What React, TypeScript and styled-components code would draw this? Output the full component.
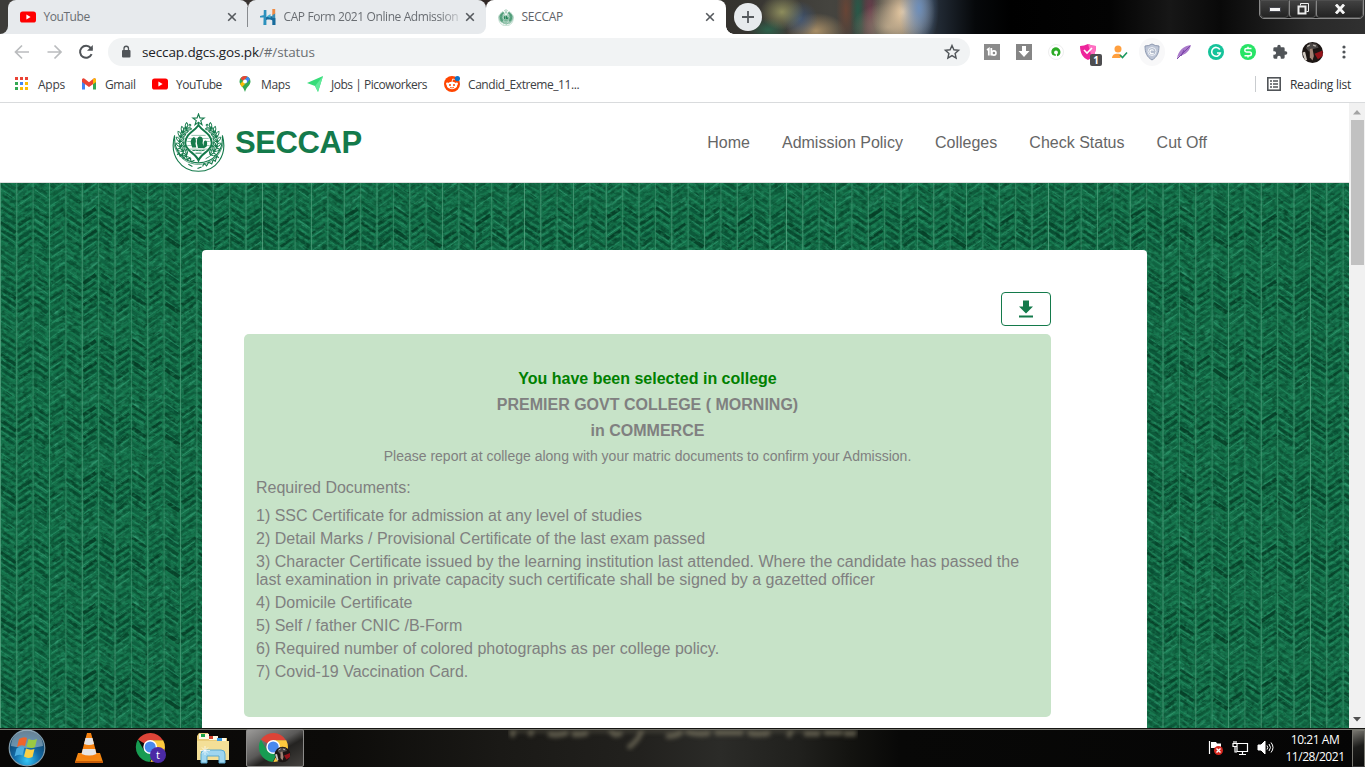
import React from "react";
import styled, { createGlobalStyle } from "styled-components";

const Global = createGlobalStyle`
  * { box-sizing: border-box; }
  html, body { margin: 0; padding: 0; overflow: hidden; background: #000; }
  p, h1, ol { margin: 0; padding: 0; }
`;

const UI = `"Open Sans", "Noto Sans", sans-serif`;
const PAGE = `"Liberation Sans", Arial, sans-serif`;
const GREEN = "#147a4b";

const Screen = styled.div`
  width: 1365px;
  height: 767px;
  display: flex;
  flex-direction: column;
  overflow: hidden;
  font-family: ${UI};
`;

/* ---------- Title bar ---------- */
const TitleBar = styled.div`
  height: 34px;
  flex: none;
  display: flex;
  align-items: flex-start;
  background:
    radial-gradient(ellipse 20px 44px at 919px 8px, rgba(100, 145, 205, 0.8), transparent),
    radial-gradient(ellipse 32px 38px at 903px 12px, rgba(235, 205, 165, 1), transparent),
    radial-gradient(ellipse 36px 24px at 888px 27px, rgba(170, 155, 130, 0.8), transparent),
    radial-gradient(ellipse 9px 40px at 870px 12px, rgba(120, 60, 80, 0.75), transparent),
    radial-gradient(ellipse 8px 40px at 858px 10px, rgba(35, 95, 75, 0.8), transparent),
    radial-gradient(ellipse 10px 34px at 846px 10px, rgba(120, 70, 50, 0.7), transparent),
    radial-gradient(ellipse 22px 18px at 782px 12px, rgba(155, 155, 100, 0.85), transparent),
    radial-gradient(ellipse 18px 18px at 800px 19px, rgba(60, 90, 135, 0.7), transparent),
    radial-gradient(ellipse 30px 18px at 816px 31px, rgba(185, 155, 110, 0.85), transparent),
    radial-gradient(ellipse 20px 12px at 768px 30px, rgba(40, 115, 85, 0.7), transparent),
    linear-gradient(90deg, #3f3d3a 0, #302725 480px, #35332f 740px, #45443f 830px, #3b3c3c 915px, #202832 940px, #06080a 975px, #000 1010px, #030303 1110px, #171717 1170px, #090909 1220px, #292929 1310px, #303030 1365px);
`;
const LeftEdge = styled.div`
  width: 8px;
  height: 34px;
  background: #e7eaed;
  &::before {
    content: "";
    display: block;
    height: 34px;
    background: #3d3c39;
    border-bottom-right-radius: 8px;
  }
`;
const TabBack = styled.div<{ $w: number; $under: string }>`
  width: ${(p) => p.$w}px;
  height: 34px;
  background: ${(p) => p.$under};
`;
const Tab = styled.div<{ $active?: boolean; $end?: boolean }>`
  height: 34px;
  display: flex;
  align-items: center;
  padding: 0 11px 0 12px;
  color: ${(p) => (p.$active ? "#5f6368" : "#6a6e73")};
  background: ${(p) => (p.$active ? "#fff" : "#e7eaed")};
  border-radius: 8px 8px ${(p) => (p.$end ? "8px" : "0")} 0;
  svg { flex: none; }
`;
const TabTitle = styled.span<{ $ls: number; $fade?: boolean }>`
  flex: 1;
  min-width: 0;
  margin: 0 5px 0 7.5px;
  font-size: 12px;
  line-height: 18px;
  letter-spacing: ${(p) => p.$ls}px;
  white-space: nowrap;
  ${(p) => p.$fade && "-webkit-mask-image: linear-gradient(90deg, #000 155px, rgba(0,0,0,.25) 175px);"}
`;
const TabRule = styled.i`
  width: 1px;
  height: 20px;
  margin: 7px 0 0 -1px;
  background: #888b8f;
`;
const Foot = styled.div`
  width: 8px;
  height: 34px;
  display: flex;
  align-items: flex-end;
  &::before {
    content: "";
    width: 8px;
    height: 8px;
    background: radial-gradient(circle at 100% 0, transparent 7.5px, #fff 8px);
  }
`;
const NewTab = styled.div`
  width: 28px;
  height: 28px;
  margin-top: 3px;
  display: grid;
  place-items: center;
  border-radius: 50%;
  background: #e7eaed;
`;
const WindowButtons = styled.div`
  display: flex;
  height: 20px;
  margin: -1px 1px 0 auto;
  border: 1px solid #898989;
  border-radius: 0 0 5px 5px;
  box-shadow: inset 0 0 0 1px #161616;
`;
const WindowButton = styled.div<{ $w: number }>`
  width: ${(p) => p.$w}px;
  display: grid;
  place-items: center;
  background: linear-gradient(#414141, #232323);
  border: 1px solid #4e4e4e;
  border-radius: 0 0 4px 4px;
  & + & { border-left: 1px solid #858585; }
`;

/* ---------- Toolbar ---------- */
const Toolbar = styled.div`
  height: 36px;
  flex: none;
  display: flex;
  align-items: center;
  padding: 0 8px 0 12px;
  background: #fff;
`;
const NavIcons = styled.div`
  display: flex;
  gap: 12px;
  width: 96px;
`;
const Address = styled.div`
  width: 862px;
  height: 28px;
  display: flex;
  align-items: center;
  padding: 0 9px 0 12px;
  border-radius: 14px;
  background: #f1f3f4;
`;
const Url = styled.span`
  flex: 1;
  margin-left: 10px;
  font-size: 13.5px;
  letter-spacing: -0.12px;
  color: #6b6f73;
  b { font-weight: 400; color: #202124; }
`;
const Extensions = styled.div`
  flex: 1;
  display: flex;
  justify-content: space-between;
  align-items: center;
  margin-left: 9px;
`;
const ExtSlot = styled.div<{ $round?: boolean }>`
  position: relative;
  width: 26px;
  height: 28px;
  display: grid;
  place-items: center;
  border-radius: 50%;
  background: ${(p) => (p.$round ? "#f8f8f9" : "transparent")};
`;
const CountBadge = styled.span`
  position: absolute;
  right: -1px;
  bottom: 0;
  width: 12px;
  height: 12px;
  border-radius: 2px;
  background: #4d4d50;
  color: #fff;
  font: 700 10px/12px ${UI};
  text-align: center;
`;

/* ---------- Bookmarks ---------- */
const Bookmarks = styled.div`
  height: 33px;
  flex: none;
  display: flex;
  align-items: center;
  padding: 0 14px 4px 13px;
  background: #fff;
  border-bottom: 1px solid #d9dbdd;
`;
const Bookmark = styled.div<{ $w: number; $ls?: number }>`
  width: ${(p) => p.$w}px;
  display: flex;
  align-items: center;
  gap: 8px;
  font-size: 12px;
  letter-spacing: ${(p) => p.$ls ?? -0.45}px;
  color: #3c4043;
  white-space: nowrap;
  svg { flex: none; }
`;
const ReadingList = styled.div`
  margin-left: auto;
  display: flex;
  align-items: center;
  gap: 8px;
  padding-left: 10px;
  border-left: 1px solid #c9cccf;
  height: 16px;
  font-size: 12px;
  letter-spacing: -0.26px;
  color: #303336;
`;

/* ---------- Web page ---------- */
const Viewport = styled.div`
  height: 625px;
  flex: none;
  display: flex;
`;
const Site = styled.main`
  width: 1349px;
  display: flex;
  flex-direction: column;
  font-family: ${PAGE};
`;
const SiteHeader = styled.header`
  height: 80px;
  flex: none;
  display: flex;
  align-items: center;
  padding: 0 142px 0 172px;
  background: #fff;
  border-bottom: 1px solid #ddd;
`;
const Brand = styled.h1`
  margin-left: 10px;
  font-size: 31px;
  line-height: 40px;
  letter-spacing: -0.4px;
  color: ${GREEN};
`;
const SiteNav = styled.nav`
  display: flex;
  gap: 32.1px;
  margin-left: auto;
  font-size: 16px;
  color: #666;
`;
const Stage = styled.section`
  position: relative;
  flex: 1;
  display: flex;
  padding: 67px 202px 0;
  overflow: hidden;
`;
const TextureSvg = styled.svg`
  position: absolute;
  inset: 0;
  width: 100%;
  height: 100%;
`;
const Card = styled.article`
  position: relative;
  width: 945px;
  display: flex;
  flex-direction: column;
  padding: 42px 96px 11px 42px;
  background: #fff;
  border-radius: 4px 4px 0 0;
`;
const DownloadButton = styled.button`
  width: 50px;
  height: 34px;
  margin: 0 0 8px auto;
  padding: 0;
  display: grid;
  place-items: center;
  flex: none;
  background: #fff;
  border: 1px solid ${GREEN};
  border-radius: 4px;
`;
const Notice = styled.div`
  height: 383px;
  flex: none;
  padding: 32px 12px 0;
  border-radius: 5px;
  background: #c7e3c8;
  color: #808080;
  font-size: 16px;
`;
const Headline = styled.p<{ $strong?: boolean }>`
  line-height: 26px;
  font-weight: 700;
  text-align: center;
  color: ${(p) => (p.$strong ? "#008000" : "inherit")};
`;
const Advice = styled.p`
  line-height: 24px;
  font-size: 14px;
  text-align: center;
`;
const ListTitle = styled.p`
  margin: 11px 0 10px;
  line-height: 18px;
`;
const Requirement = styled.p`
  margin-bottom: 5px;
  line-height: 18px;
`;
const ScrollTrack = styled.div`
  width: 16px;
  display: flex;
  flex-direction: column;
  justify-content: space-between;
  align-items: center;
  padding: 6px 1px 6px;
  background: #f1f1f1;
`;
const Thumb = styled.div`
  width: 13px;
  height: 145px;
  margin: 5px 0 auto;
  background: #c1c1c1;
`;

/* ---------- Taskbar ---------- */
const Taskbar = styled.footer`
  position: relative;
  height: 39px;
  flex: none;
  display: flex;
  align-items: stretch;
  border-top: 1px solid #151512;
  box-shadow: inset 0 1px #77776f;
  background: linear-gradient(90deg, #080706 0, #0c0b09 330px, #1a1916 500px, #22211e 640px, #2b2b28 720px, #20201d 800px, #131310 850px, #080807 900px, #050505 1365px);
`;
const TaskSlot = styled.div<{ $w: number; $active?: boolean }>`
  width: ${(p) => p.$w}px;
  display: grid;
  place-items: center;
  ${(p) =>
    p.$active &&
    `
    border: 1px solid #8c8b89;
    border-radius: 2px;
    background: linear-gradient(150deg, #9b9a98 0, #5a5958 45%, #242321 60%, #45423f 100%);
  `}
`;
const Reflection = styled.div`
  position: absolute;
  left: 508px;
  top: 1px;
  width: 350px;
  height: 22px;
  overflow: hidden;
  svg { display: block; filter: blur(1.9px); }
`;
const Tray = styled.div`
  display: flex;
  align-items: center;
  gap: 8px;
  margin-left: auto;
  margin-right: 7px;
`;
const Clock = styled.div`
  width: 60px;
  margin-left: 3px;
  text-align: center;
  color: #fff;
  font-size: 12px;
  line-height: 17px;
  letter-spacing: -0.45px;
  white-space: nowrap;
`;
const ShowDesktop = styled.div`
  width: 13px;
  margin-top: 1px;
  border: 1px solid #77766f;
  border-bottom-color: #333;
  background: linear-gradient(160deg, #77756f, #1c1c1a 45%, #0b0b0a);
`;

/* ---------- Icons ---------- */
const YouTubeIcon = () => (
  <svg width="16" height="16" viewBox="0 0 16 16">
    <rect y="2.4" width="16" height="11.2" rx="2.6" fill="#f00" />
    <path d="M6.4 5.6v4.8L10.6 8z" fill="#fff" />
  </svg>
);
const CloseIcon = () => (
  <svg width="10" height="10" viewBox="0 0 10 10" stroke="#55595d" strokeWidth="1.6">
    <path d="M1.2 1.2l7.6 7.6M8.8 1.2L1.2 8.8" />
  </svg>
);
const HIcon = () => (
  <svg width="16" height="16" viewBox="0 0 16 16">
    <path d="M3.800 1h2.600v15H3.400zM0 7l4-1v2.500H0z" fill="#2c91bd" />
    <path d="M6 8.200c4-1.500 8-1 9.500 1V16h-3.200v-4.500c-1-1-4.500-1.200-6.300-.4z" fill="#176b9c" />
    <path d="M12.300 5.500l2.900-1.500V9h-2.900z" fill="#3a8db4" />
    <path d="M12.300 0h2.900v4.500l-2.900 1.800z" fill="#ee8a43" />
    <path d="M6.500 7.600l4-2.500V9z" fill="#45afd2" />
  </svg>
);

const Emblem = ({ w, h, tiny }: { w: number; h: number; tiny?: boolean }) => (
  <svg width={w} height={h} viewBox="0 0 52 58" fill="none" stroke={tiny ? "#4b9a75" : GREEN} strokeWidth={tiny ? 2.2 : 0.9}>
    <path d="M26 1l1.400 3.900 4.100.1-3.300 2.500 1.200 4L26 9.200l-3.400 2.300 1.200-4-3.300-2.500 4.100-.1z" strokeWidth="1.100" />
    {[0, 1].map((side) => (
      <g key={side} transform={side ? "translate(52 0) scale(-1 1)" : undefined}>
        <path d="M19 45C9 40 5 31 9 22c1.500-4 3-6 5-9" strokeWidth=".8" />
        {[0, 1, 2, 3, 4, 5, 6].map((i) => {
          const a = ((130 + i * 16) * Math.PI) / 180;
          const x = 26 + Math.cos(a) * 17.8;
          const y = 28 + Math.sin(a) * 17;
          return (
            <g key={i} transform={`translate(${x.toFixed(1)} ${y.toFixed(1)}) rotate(${226 + i * 16})`}>
              <path d="M0 0q1-4 4.500-4.600q.5 3.600-4.500 4.600z" />
              <path d="M0 0q1 3.500 4.500 3.400q0-3-4.500-3.400z" fill={GREEN} fillOpacity=".35" />
              <circle cx="5.500" cy="-.6" r=".9" />
            </g>
          );
        })}
      </g>
    ))}
    <path d="M26 11.500C27.500 16.500 39 19.500 39 29.500c0 8-10 9.500-13 17-3-7.500-13-9-13-17 0-10 11.500-13 13-18z" fill="#fff" strokeWidth="1.900" />
    <path d="M19 22h14M16 25h20M15 28h4M33 28h4M15 32h6M31 32h6M17 35.500h18" strokeWidth=".7" opacity=".65" />
    <path d="M18.500 30c-.5-4 1-5.500 3-6.500 2 1 2.500 3.500 1.500 6.500l.8 4h-4zM24.500 30c-.5-5 1-7 3-7 2.500 0 3.500 3 2.500 6.500l1.500 5h-6zM31 31c0-3 .5-4 2-4s2 3 1 6l-3 2z" fill={GREEN} stroke="none" />
    <path d="M20 37c4-1 8 1 12-.500M23 39.500h6" />
    <path d="M2.500 22C-3 42 9 57.300 26 57.300S55 42 49.500 22c1 16-9 27-23.500 27S1.500 38 2.500 22z" fill="#fff" strokeWidth="1.100" />
    <path d="M1.500 29c3 15 14 21.500 24.500 21.500S47.500 44 50.500 29" strokeWidth=".7" />
    <path d="M5 41l2-1.500 1 3 2.500-2 .5 4 3-2.500 1 4 2.500-2 1.500 4 3-1.500M30 52.500l1.500-3 2.500 2.500 2-3.500 3 1.500 1.500-4 2 1.500 1.500-5 2 1.500M25 54.500l4-1.500M16 50.500l4 2" strokeWidth="1.100" />
    {tiny && <path d="M4 20h44v20L26 54 4 40z" fill="#4b9a75" opacity=".35" stroke="none" />}
  </svg>
);

const PhotoArt = () => (
  <g>
    <circle cx="8.500" cy="8.500" r="7.800" fill="#1c1614" />
    <path d="M3.500 5l3-3.500 5 .5 1.500 3-4 1-3 2z" fill="#4b4745" />
    <path d="M4.500 4l2-1M9 3l2 .8" stroke="#bab3ac" strokeWidth="1" />
    <path d="M10 9.500l6-2.500v4l-3.500 2.500z" fill="#96141a" />
    <path d="M6.500 6l2-.5 1 5.500-1 3.500-2-2.500z" fill="#a08476" />
    <path d="M1 8.500l2-.5 1.500 6-1.500.5z" fill="#cfc8bf" />
  </g>
);

const ChromeIcon = ({ badge }: { badge: "t" | "photo" }) => (
  <svg width="34" height="34" viewBox="0 0 34 34">
    <path d="M15 16L2.900 8.600A14.800 14.800 0 0 1 28 9.200L15 9.500z" fill="#dc4437" />
    <path d="M15 16V9.200h13.200A14.800 14.800 0 0 1 15.400 31l5.500-11.600z" fill="#fdca3e" />
    <path d="M15 16l6 3.400-6.500 11.500A14.800 14.800 0 0 1 2.900 8.600L9 19.400z" fill="#179c52" />
    <circle cx="15.200" cy="16" r="6.900" fill="#fff" />
    <circle cx="15.200" cy="16" r="5.500" fill="#4a89ee" />
    {badge === "t" ? (
      <>
        <circle cx="23" cy="24" r="8" fill="#4b2aa5" />
        <text x="23" y="28" fill="#fff" fontFamily="Open Sans" fontSize="11" textAnchor="middle">t</text>
      </>
    ) : (
      <g transform="translate(16 15)"><PhotoArt /></g>
    )}
  </svg>
);

/* Deterministic noise keeps the woven backdrop stable between renders. */
const makeRandom = (seed: number) => () => {
  seed = (seed * 1664525 + 1013904223) % 4294967296;
  return seed / 4294967296;
};
const COL = 16.375;
const TILE_H = 66;
const weave = (() => {
  const r = makeRandom(71);
  const darks = ["#043a24", "#06452c", "#084e33"];
  const lights = ["#1d8a5c", "#28936a", "#167a50", "#329a72"];
  const out: { d: string; c: string; w: number; o: number }[] = [];
  const add = (col: number, y: number, x0: number, len: number, slope: number, c: string, w: number, o: number) => {
    for (const shift of [-TILE_H, 0, TILE_H]) {
      const ya = y + shift + (x0 - COL / 2) * slope;
      out.push({
        d: `M${(col * COL + x0).toFixed(1)} ${ya.toFixed(1)}l${len.toFixed(1)} ${(len * slope).toFixed(1)}`,
        c, w, o,
      });
    }
  };
  for (let col = 0; col < 16; col++) {
    const dir = col % 2 === 0 ? 1 : -1;
    for (let i = 0; i < 30; i++) {
      const x0 = r() * 11;
      const pool = r() < 0.4 ? darks : lights;
      add(col, r() * TILE_H, x0, 2 + r() * Math.min(5, COL - x0 - 2), dir * (0.2 + r() * 0.8), pool[Math.floor(r() * pool.length)], 0.8 + r(), 0.3 + r() * 0.4);
    }
    for (let i = 0; i < 9; i++) {
      /* Strands deepen through the lower half of each repeat. */
      const depth = i > 3 ? 0.9 : 0.55;
      const x0 = 0.5 + r() * 2;
      const y = i * 7.33 + r() * 1.5;
      const len = COL - x0 - 0.5 - r() * 2;
      add(col, y, x0, len, dir * 0.68, darks[(i + col) % 3], 2.2 + r() * 1.6, depth * (0.6 + r() * 0.35));
      add(col, y + 3.4, x0, len, dir * 0.68, lights[(i + col) % 4], 0.9, 0.45 + r() * 0.4);
    }
  }
  return out;
})();

const Texture = () => (
  <TextureSvg>
    <defs>
      <filter id="grainDark" x="0" y="0" width="100%" height="100%" colorInterpolationFilters="sRGB">
        <feTurbulence type="fractalNoise" baseFrequency="0.18 0.24" numOctaves="2" seed="4" />
        <feColorMatrix values="0 0 0 0 0.01  0 0 0 0 0.22  0 0 0 0 0.13  5 0 0 0 -2.500" />
      </filter>
      <filter id="grainLight" x="0" y="0" width="100%" height="100%" colorInterpolationFilters="sRGB">
        <feTurbulence type="fractalNoise" baseFrequency="0.2 0.28" numOctaves="2" seed="9" />
        <feColorMatrix values="0 0 0 0 0.17  0 0 0 0 0.6  0 0 0 0 0.42  0 5 0 0 -2.600" />
      </filter>
      <pattern id="weave" width={COL * 16} height={TILE_H} patternUnits="userSpaceOnUse">
        <rect width={COL * 16} height={TILE_H} fill="#147049" />
        {weave.map((s, i) => (
          <path key={i} d={s.d} stroke={s.c} strokeWidth={s.w} opacity={s.o} />
        ))}
      </pattern>
      <pattern id="seams" width={COL * 16} height={TILE_H} patternUnits="userSpaceOnUse">
        {Array.from({ length: 17 }, (_, i) => (
          <path key={i} d={`M${i * COL + 0.4} 0V${TILE_H}`} stroke="#6fb496" strokeWidth="0.8" opacity={i === 0 || i === 16 ? 0.85 : i % 2 ? 0.6 : 0.4} />
        ))}
      </pattern>
    </defs>
    <rect width="100%" height="100%" fill="url(#weave)" />
    <rect width="100%" height="100%" filter="url(#grainDark)" opacity=".35" />
    <rect width="100%" height="100%" filter="url(#grainLight)" opacity=".35" />
    <rect width="100%" height="100%" fill="url(#seams)" />
  </TextureSvg>
);

const requirements = [
  "1) SSC Certificate for admission at any level of studies",
  "2) Detail Marks / Provisional Certificate of the last exam passed",
  "3) Character Certificate issued by the learning institution last attended. Where the candidate has passed the last examination in private capacity such certificate shall be signed by a gazetted officer",
  "4) Domicile Certificate",
  "5) Self / father CNIC /B-Form",
  "6) Required number of colored photographs as per college policy.",
  "7) Covid-19 Vaccination Card.",
];

function BrowserChrome() {
  return (
    <>
      <TitleBar>
        <LeftEdge />
        <TabBack $w={240} $under="transparent">
          <Tab><YouTubeIcon /><TabTitle $ls={-0.45}>YouTube</TabTitle><CloseIcon /></Tab>
        </TabBack>
        <TabRule />
        <TabBack $w={238} $under="linear-gradient(transparent 50%, #fff 50%)">
          <Tab $end><HIcon /><TabTitle $ls={-0.4} $fade>CAP Form 2021 Online Admission</TabTitle><CloseIcon /></Tab>
        </TabBack>
        <TabBack $w={240} $under="transparent">
          <Tab $active><Emblem w={16} h={17} tiny /><TabTitle $ls={-0.3}>SECCAP</TabTitle><CloseIcon /></Tab>
        </TabBack>
        <Foot />
        <NewTab>
          <svg width="12" height="12" viewBox="0 0 12 12" stroke="#55595d" strokeWidth="1.800"><path d="M6 0v12M0 6h12" /></svg>
        </NewTab>
        <WindowButtons>
          <WindowButton $w={29}><svg width="12" height="5"><rect x=".5" y=".5" width="11" height="4" fill="#f5f5f5" stroke="#45464d" /></svg></WindowButton>
          <WindowButton $w={27}>
            <svg width="12" height="12" viewBox="0 0 12 12" fill="none" stroke="#eee"><path d="M3.500 2.500v-2h8v8h-2" /><rect x="1.500" y="3.500" width="7" height="7" strokeWidth="2" /></svg>
          </WindowButton>
          <WindowButton $w={47}><svg width="12" height="10" viewBox="0 0 12 10" stroke="#f4f4f4" strokeWidth="2.800"><path d="M2 .5l8 9M10 .5l-8 9" /></svg></WindowButton>
        </WindowButtons>
      </TitleBar>
      <Toolbar>
        <NavIcons>
          {[false, true].map((flip) => (
            <svg key={String(flip)} width="20" height="20" viewBox="0 0 20 20" fill="none" stroke="#babcbe" strokeWidth="1.700">
              <path d={flip ? "M3.500 10h13M10.500 3.500l6.500 6.500-6.500 6.500" : "M17 10h-13M10 3.500L3.500 10l6.500 6.500"} />
            </svg>
          ))}
          <svg width="20" height="20" viewBox="0 0 20 20" fill="none" stroke="#505458" strokeWidth="2">
            <path d="M15.600 12.200A6 6 0 1 1 14.700 6L16 7.500" /><path d="M16.800 3v5.800H11z" fill="#505458" stroke="none" />
          </svg>
        </NavIcons>
        <Address>
          <svg width="12" height="14" viewBox="0 0 12 14"><rect x="2" y="5" width="8.500" height="7.500" rx="1" fill="#505458" /><path d="M4 5V3.500a2.250 2.250 0 0 1 4.500 0V5" fill="none" stroke="#505458" strokeWidth="1.300" /></svg>
          <Url><b>seccap.dgcs.gos.pk</b>/#/status</Url>
          <svg width="18" height="18" viewBox="0 0 18 18" fill="none" stroke="#505458" strokeWidth="1.400"><path d="M9 2.500l1.900 4.300 4.700.5-3.500 3.100 1 4.600L9 12.600 4.900 15l1-4.600-3.500-3.100 4.700-.5z" /></svg>
        </Address>
        <Extensions>
          <ExtSlot><svg width="16" height="16"><rect width="16" height="16" fill="#8b8b8b" /><path d="M3 6l1.800-1.200V11.500M7.300 4v7.500" stroke="#fff" strokeWidth="1.800" fill="none" /><circle cx="9.900" cy="9" r="2.100" fill="none" stroke="#fff" strokeWidth="1.600" /></svg></ExtSlot>
          <ExtSlot><svg width="16" height="16"><rect width="16" height="16" fill="#858585" /><path d="M6 2h4v5h3.500L8 13 2.500 7H6z" fill="#fff" /></svg></ExtSlot>
          <ExtSlot><svg width="18" height="18"><circle cx="9" cy="9" r="7.500" fill="#fff" stroke="#eee" /><path d="M5.500 12a4.600 4.600 0 1 1 8-3c0 2.500-1.500 4-3.500 4.300V9.500L8.500 13z" fill="#2bab25" /><circle cx="9" cy="9.500" r="1.900" fill="#fff" /></svg></ExtSlot>
          <ExtSlot>
            <svg width="18" height="18"><path d="M1 3q4 0 8-2 4 2 8 2c0 7-3 12-8 14C4 15 1 10 1 3z" fill="#ed249b" /><path d="M9 1q4 2 8 2c0 6-2 9-4 12z" fill="#ff70c2" /><path d="M5 7l3 3 5-5" fill="none" stroke="#fff" strokeWidth="1.600" /></svg>
            <CountBadge>1</CountBadge>
          </ExtSlot>
          <ExtSlot><svg width="16" height="16"><circle cx="6" cy="5" r="3.500" fill="#ff9f3e" /><path d="M0 14c0-4 4-5 8-4l2 2-2 2z" fill="#ff9f3e" /><path d="M8 11l2.500 2.500L15 8.500" fill="none" stroke="#1b9961" strokeWidth="1.600" /></svg></ExtSlot>
          <ExtSlot $round><svg width="16" height="18" viewBox="0 0 16 18"><path d="M1 3q4 0 7-2 3 2 7 2c0 7-2 11-7 14C3 14 1 10 1 3z" fill="#bdc5d6" stroke="#8d99b0" /><circle cx="8" cy="8.500" r="4" fill="#b3bccd" stroke="#eef1f6" /><path d="M9.500 7.500a2 2 0 1 0 0 2.500" fill="none" stroke="#fff" strokeWidth="1.200" /></svg></ExtSlot>
          <ExtSlot><svg width="16" height="16"><path d="M1 15C2 6 8 2 15 1c-1 5-5 10-12 11z" fill="#a979ca" /><path d="M1 15L14 2M5 12L8 6" stroke="#7b45a8" /></svg></ExtSlot>
          <ExtSlot><svg width="16" height="16"><circle cx="8" cy="8" r="8" fill="#15c39a" /><path d="M11.800 5.500A4.400 4.400 0 1 0 12.300 9H9" fill="none" stroke="#fff" strokeWidth="1.600" /></svg></ExtSlot>
          <ExtSlot><svg width="16" height="16"><circle cx="8" cy="8" r="8" fill="#27e466" /><path d="M11.500 4.500h-5a1.700 1.700 0 0 0 0 3.400h3a1.900 1.900 0 0 1 0 3.800h-5M8 2.700V4M8 12v1.500" fill="none" stroke="#fff" strokeWidth="1.500" /></svg></ExtSlot>
          <ExtSlot><svg width="16" height="16" viewBox="0 0 24 24" fill="#505458"><path d="M20.500 11H19V7a2 2 0 0 0-2-2h-4V3.500a2.500 2.500 0 0 0-5 0V5H4a2 2 0 0 0-2 2v3.800h1.500a2.700 2.700 0 0 1 0 5.400H2V20a2 2 0 0 0 2 2h3.800v-1.500a2.700 2.700 0 0 1 5.400 0V22H17a2 2 0 0 0 2-2v-4h1.500a2.500 2.500 0 0 0 0-5z" /></svg></ExtSlot>
          <ExtSlot><svg width="23" height="23" viewBox="0 0 17 17"><PhotoArt /></svg></ExtSlot>
          <ExtSlot><svg width="4" height="16" fill="#505458"><circle cx="2" cy="3" r="1.600" /><circle cx="2" cy="8" r="1.600" /><circle cx="2" cy="13" r="1.600" /></svg></ExtSlot>
        </Extensions>
      </Toolbar>
      <Bookmarks>
        <Bookmark $w={68} $ls={-0.25}>
          <svg width="17" height="16">
            {["#ea4335", "#ea4335", "#ea4335", "#34a853", "#4285f4", "#fbbc05", "#34a853", "#fbbc05", "#fbbc05"].map((c, i) => (
              <rect key={i} x={2 + (i % 3) * 5} y={1 + Math.floor(i / 3) * 5} width="3" height="3" fill={c} />
            ))}
          </svg>Apps
        </Bookmark>
        <Bookmark $w={71} $ls={-0.4}>
          <svg width="16" height="16"><path d="M1 13.500V3l3 2.500v8z" fill="#4285f4" /><path d="M12 13.500v-8L15 3v10.500z" fill="#34a853" /><path d="M1 3.500Q2 1.500 4 3l4 3.200L12 3q2-1.500 3 .5V6L8 11 1 6z" fill="#ea4335" /><path d="M12 3q2-1.500 3 .5V6l-3 2.200z" fill="#fbbc05" /></svg>Gmail
        </Bookmark>
        <Bookmark $w={85} $ls={-0.5}><YouTubeIcon />YouTube</Bookmark>
        <Bookmark $w={70} $ls={-0.35}>
          <svg width="16" height="16"><path d="M8 0a5.500 5.500 0 0 0-5.500 5.500c0 4 4 5 5.500 10.500 1.500-5.500 5.500-6.500 5.500-10.500A5.500 5.500 0 0 0 8 0z" fill="#34a853" /><path d="M8 0a5.500 5.500 0 0 0-4.500 2.400L6 5l4.500-4.500z" fill="#ea4335" /><path d="M10.500.5L7 5l3 2 3-4z" fill="#4285f4" /><path d="M3 8l3-3 2 3-3 3z" fill="#fbbc05" /><circle cx="8" cy="5.500" r="2" fill="#fff" /></svg>Maps
        </Bookmark>
        <Bookmark $w={137} $ls={-0.48}>
          <svg width="16" height="16"><path d="M0 7L16 0l-5 16-3-6z" fill="#36dc79" /><path d="M16 0L8 10l3 6z" fill="#61e99a" /></svg>Jobs | Picoworkers
        </Bookmark>
        <Bookmark $w={150} $ls={-0.43}>
          <svg width="16" height="16"><circle cx="8" cy="8" r="8" fill="#ff4500" /><ellipse cx="8" cy="9.500" rx="5.200" ry="3.700" fill="#fff" /><circle cx="3.300" cy="7.800" r="1.300" fill="#fff" /><circle cx="12.700" cy="7.800" r="1.300" fill="#fff" /><circle cx="6" cy="9" r="1" fill="#ff4500" /><circle cx="10" cy="9" r="1" fill="#ff4500" /><path d="M6 11.300q2 1.300 4 0" fill="none" stroke="#ff4500" strokeWidth=".8" /><path d="M8 6l.7-3 2 .5" fill="none" stroke="#fff" strokeWidth=".8" /><circle cx="13.400" cy="2.600" r="2.600" fill="#0f73c8" /></svg>Candid_Extreme_11...
        </Bookmark>
        <ReadingList>
          <svg width="16" height="16" fill="none" stroke="#505458" strokeWidth="1.600"><rect x="1.800" y="1.800" width="12.400" height="12.400" /><path d="M4 5h2M7 5h5M4 8h2M7 8h5M4 11h2M7 11h5" strokeWidth="1.500" /></svg>
          Reading list
        </ReadingList>
      </Bookmarks>
    </>
  );
}

function StatusPage() {
  return (
    <Viewport>
      <Site>
        <SiteHeader>
          <Emblem w={53} h={59} />
          <Brand>SECCAP</Brand>
          <SiteNav>
            <span>Home</span><span>Admission Policy</span><span>Colleges</span><span>Check Status</span><span>Cut Off</span>
          </SiteNav>
        </SiteHeader>
        <Stage>
          <Texture />
          <Card>
            <DownloadButton aria-label="Download">
              <svg width="14" height="18" viewBox="0 0 14 18" fill={GREEN}><path d="M4 0.500h6v6h4l-7 7-7-7h4zM0 15.500h14v2H0z" /></svg>
            </DownloadButton>
            <Notice>
              <Headline $strong>You have been selected in college</Headline>
              <Headline>PREMIER GOVT COLLEGE ( MORNING)</Headline>
              <Headline>in COMMERCE</Headline>
              <Advice>Please report at college along with your matric documents to confirm your Admission.</Advice>
              <ListTitle>Required Documents:</ListTitle>
              {requirements.map((text) => <Requirement key={text}>{text}</Requirement>)}
            </Notice>
          </Card>
        </Stage>
      </Site>
      <ScrollTrack>
        <svg width="8" height="6"><path d="M0 5.500L4 1l4 4.500z" fill="#a3a3a3" /></svg>
        <Thumb />
        <svg width="8" height="5"><path d="M0 0h8L4 4.500z" fill="#505050" /></svg>
      </ScrollTrack>
    </Viewport>
  );
}

function WindowsTaskbar() {
  return (
    <Taskbar>
      <Reflection>
        <svg width="350" height="22" fill="none" stroke="#77735f" strokeWidth="5">
          <path d="M6 0l-2 7M24 0l-2 6M40 4q8 3 20-1M64 4q8 2 16-1M102 0q4 8 12 3M134 0q-3 10-14 18M158 6q10 1 16-4M178 2q12 4 24 1M207 3h28M240 3q10 3 22 0M284 0l-4 7M296 4h16M316 3h18M336 4h12" opacity=".7" />
          <path d="M0 0h350" opacity=".45" />
        </svg>
      </Reflection>
      <TaskSlot $w={54}>
        <svg width="38" height="38" viewBox="0 0 38 38">
          <defs><radialGradient id="orb" cx=".5" cy=".85" r=".8"><stop stopColor="#35c6f6" /><stop offset=".45" stopColor="#126aa7" /><stop offset="1" stopColor="#113653" /></radialGradient></defs>
          <circle cx="19" cy="19" r="17.800" fill="url(#orb)" stroke="#7f9cad" strokeWidth="1.200" />
          <path d="M3 17a16 16 0 0 1 32 0q-16 4-32 0z" fill="#c0d2dc" opacity=".5" />
          <path d="M11 10q5-3 8-1l-2 8q-4-2-8 1z" fill="#ee652c" /><path d="M20.500 10q4 2 8.500 0l-2 8q-4 2-8.500-.5z" fill="#9aca42" />
          <path d="M8.500 19.500q4-3 8-1l-2 8q-4-2-8 1z" fill="#4baddf" /><path d="M18 19.500q4 2 8.500.5l-2 8q-5 2-8.500-.5z" fill="#fad044" />
        </svg>
      </TaskSlot>
      <TaskSlot $w={70}>
        <svg width="28" height="32" viewBox="0 0 28 32"><path d="M3 21h22l3 9H0z" fill="#f48611" /><path d="M0 29h28v2H0z" fill="#c65d08" /><path d="M12 1h4l6.500 24q-8 4-17 0z" fill="#f68210" /><path d="M10.500 6h7l1.500 6q-5 2-10 0zM7.800 17h12.400l1.200 5q-7 3-14.800 0z" fill="#e6e6e6" /></svg>
      </TaskSlot>
      <TaskSlot $w={56}><ChromeIcon badge="t" /></TaskSlot>
      <TaskSlot $w={66}>
        <svg width="34" height="32" viewBox="0 0 34 32"><path d="M1 4l2-3h9l1 3h8l1 2h9v22H1z" fill="#e9cd79" /><path d="M3 2h10v5H3zM13 4h9v4h-9zM21 6h9v4h-9z" fill="#fffbe6" /><path d="M5 2h4v3H5z" fill="#1aa447" /><path d="M13 4h4v3h-4z" fill="#d4442f" /><path d="M21 6h5v3h-5z" fill="#3a9ae3" /><path d="M1 9h32v19H1z" fill="#f3df97" /><path d="M5 31V22q0-4 4-4h16q4 0 4 4v9h-6v-7H11v7z" fill="#9fd6f0" stroke="#5baad0" /><path d="M9 14v9M4 18.500h10M6 15.500l6 6M12 15.500l-6 6" stroke="#fff" strokeWidth=".7" /></svg>
      </TaskSlot>
      <TaskSlot $w={58} $active><ChromeIcon badge="photo" /></TaskSlot>
      <Tray>
        <svg width="16" height="16"><path d="M1.500 1v13" stroke="#fff" strokeWidth="1.200" /><path d="M3 2h5l1 1.500h4V8H3z" fill="#fff" /><circle cx="10.500" cy="10.500" r="4.500" fill="#d7281f" /><path d="M8.500 8.500l4 4M12.500 8.500l-4 4" stroke="#fff" strokeWidth="1.400" /></svg>
        <svg width="17" height="16" fill="none" stroke="#fff"><path d="M5 3.500h10.500v8H5zM7 14.500h7M10.500 12v2M3 7v5h2M1 3.500h4v3H1zM2 1v2M4 1v2" strokeWidth="1.200" /></svg>
        <svg width="17" height="16" fill="none" stroke="#fff"><path d="M1 5h3l4-4v13l-4-4H1z" fill="#fff" /><path d="M10 5.500q1.500 2 0 4M12 4q3 3.500 0 7M14 2.500q4 5 0 10" /></svg>
        <Clock>10:21 AM<br />11/28/2021</Clock>
      </Tray>
      <ShowDesktop />
    </Taskbar>
  );
}

export default function App() {
  return (
    <>
      <Global />
      <Screen>
        <BrowserChrome />
        <StatusPage />
        <WindowsTaskbar />
      </Screen>
    </>
  );
}
